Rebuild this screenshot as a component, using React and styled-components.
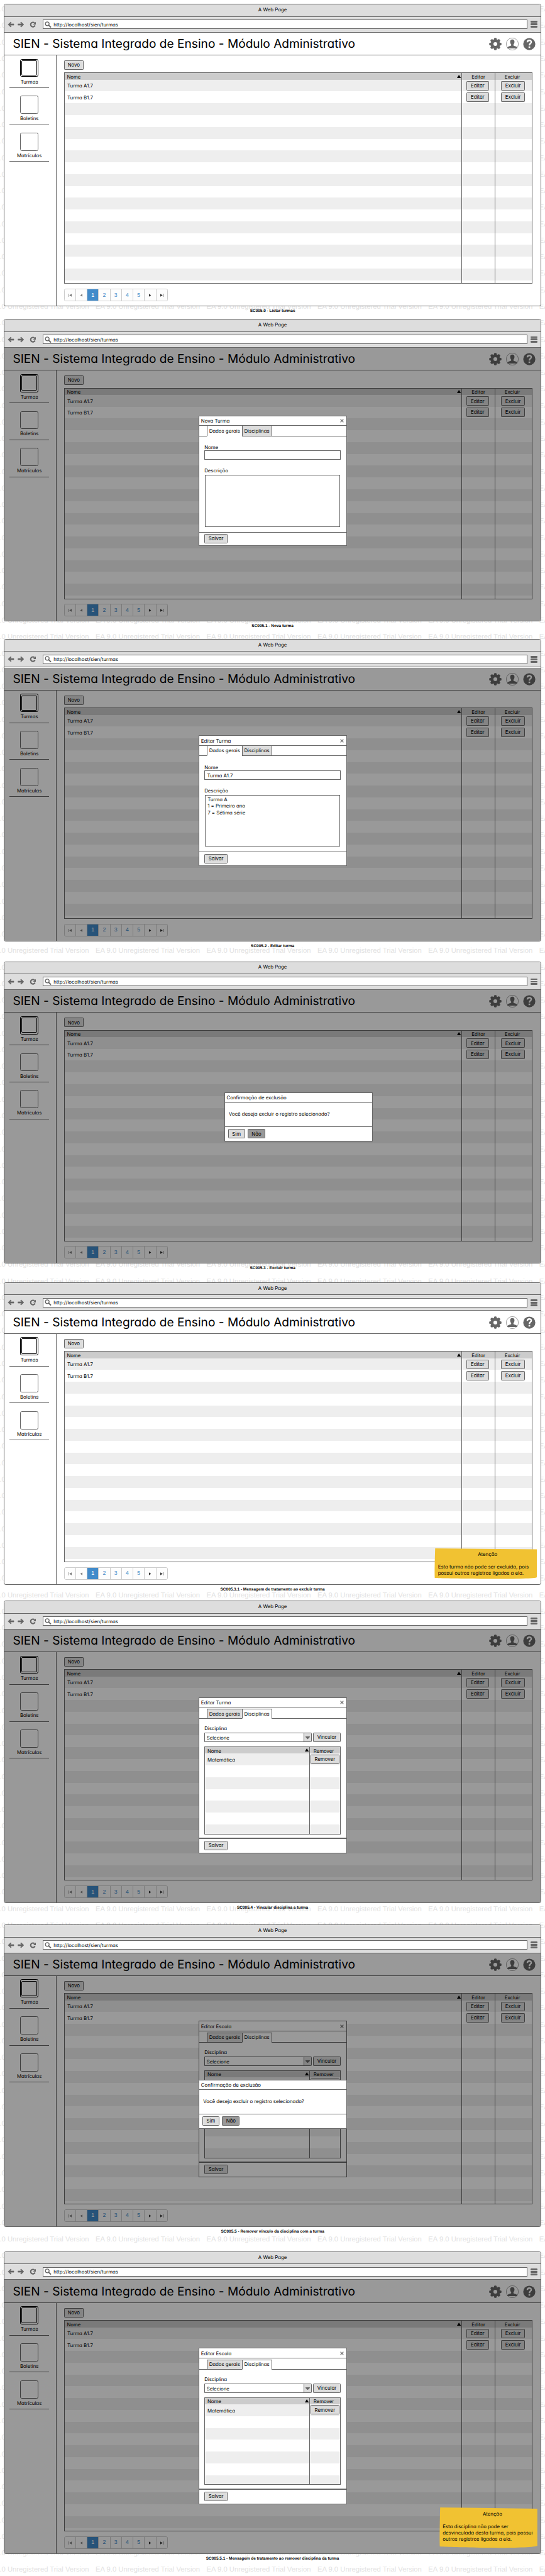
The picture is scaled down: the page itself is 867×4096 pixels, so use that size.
import React from "react";
import styled, { createGlobalStyle, css } from "styled-components";

const u = (n) => `${+(n * 0.6257).toFixed(4)}px`;
const LINE = "#666";
const line = `1px solid ${LINE}`;

const GlobalStyle = createGlobalStyle`
  *, *::before, *::after { box-sizing: border-box; }
  html, body { margin: 0; padding: 0; background: #fff; }
  body {
    font-family: Inter, "Liberation Sans", sans-serif;
    font-size: ${u(12.5)};
    line-height: ${u(16)};
    font-feature-settings: "cv11" 1, "calt" 0;
    text-rendering: geometricPrecision;
    color: #000;
  }
`;

/* ---------- sheet and watermark ---------- */

const Sheet = styled.main`
  display: grid;
  width: 867px;
  height: 4096px;
  overflow: hidden;
`;

const Watermark = styled.div`
  grid-area: 1 / 1;
  overflow: hidden;
  height: 4096px;
  padding-top: ${u(3.5)};
  color: #e2e2e2;
  font: ${u(18.04)} / ${u(42)} "Liberation Sans", Arial, sans-serif;
`;

const WatermarkRow = styled.div`
  display: flex;
  height: ${u(42)};
  margin-left: ${u(-39)};
  white-space: nowrap;
`;

const WatermarkText = styled.span`
  flex: 0 0 ${u(282)};
`;

const Screens = styled.div`
  grid-area: 1 / 1;
  z-index: 1;
  padding: ${u(10)} 0 0 ${u(10)};
`;

const Figure = styled.figure`
  margin: 0;
  padding-top: ${(p) => u(p.$gap)};
  width: ${u(1366)};
`;

const Caption = styled.figcaption`
  margin-top: ${u(7)};
  height: ${u(12)};
  text-align: center;
  font: bold ${u(10.36)} / ${u(12)} "Liberation Sans", Arial, sans-serif;
`;

/* ---------- browser window ---------- */

const Window = styled.div`
  position: relative;
  display: flex;
  flex-direction: column;
  height: ${u(768)};
  border: ${u(2.4)} solid ${LINE};
  border-radius: ${u(5)};
  background: #fff;
  overflow: hidden;
`;

const TitleBar = styled.div`
  flex: 0 0 ${u(31)};
  padding-top: ${u(4)};
  text-align: center;
  background: #ddd;
  border-bottom: ${line};
`;

const AddressBar = styled.div`
  flex: 0 0 ${u(40)};
  display: flex;
  align-items: center;
  padding: 0 ${u(7.5)} 0 ${u(8)};
  background: #ddd;
  border-bottom: ${line};
`;

const NavIcons = styled.div`
  display: flex;
  width: ${u(89)};
  svg { display: block; height: ${u(16)}; width: ${u(17)}; }
  svg + svg { margin-left: ${u(8)}; }
  svg:last-child { margin-left: ${u(13)}; }
`;

const UrlField = styled.div`
  display: flex;
  align-items: center;
  flex: 1;
  height: ${u(24)};
  padding-left: ${u(4)};
  background: #fff;
  border: ${line};
  svg { width: ${u(17)}; height: ${u(16)}; margin-right: ${u(5)}; }
`;

const MenuIcon = styled.div`
  display: flex;
  flex-direction: column;
  justify-content: space-between;
  width: ${u(18)};
  height: ${u(16.5)};
  margin-left: ${u(8)};
  i { height: ${u(4.2)}; border-radius: ${u(2)}; background: ${LINE}; }
`;

const AppHeader = styled.header`
  flex: 0 0 ${u(58)};
  display: flex;
  align-items: center;
  justify-content: space-between;
  padding: 0 ${u(13)} 0 ${u(21)};
  border-bottom: ${line};
`;

const AppTitle = styled.h1`
  margin: 0;
  font-size: ${u(30.6)};
  line-height: 1;
  font-weight: 400;
  white-space: nowrap;
`;

const HeaderIcons = styled.div`
  display: flex;
  gap: ${u(11)};
  margin-top: ${u(3)};
  svg { display: block; width: ${u(32)}; height: ${u(32)}; }
`;

const Body = styled.div`
  flex: 1;
  display: flex;
  min-height: 0;
`;

const Sidebar = styled.nav`
  flex: 0 0 ${u(132)};
  padding: ${u(9)} 0 0 ${u(13)};
  border-right: ${line};
`;

const NavItem = styled.div`
  display: flex;
  flex-direction: column;
  align-items: center;
  width: ${u(100)};
  height: ${u(74)};
  margin-bottom: ${u(20)};
  border-bottom: ${line};
`;

const NavTile = styled.span`
  display: flex;
  width: ${u(46)};
  height: ${u(46)};
  margin-bottom: ${u(3.5)};
  padding: ${u(1.8)};
  border: ${u(2.4)} solid ${(p) => (p.$active ? "#000" : LINE)};
  border-radius: ${u(4)};
  ${(p) => p.$active && css`
    &::before {
      content: "";
      flex: 1;
      border: 1px solid #000;
      border-radius: ${u(3)};
    }
  `}
`;

const Main = styled.section`
  flex: 1;
  min-width: 0;
  padding: ${u(13)} ${u(21)} 0 ${u(19)};
`;

/* ---------- controls ---------- */

const Button = styled.button`
  display: flex;
  align-items: center;
  justify-content: center;
  flex: none;
  width: ${(p) => u(p.$w)};
  height: ${u(24)};
  padding: 0 0 ${u(1)};
  font: inherit;
  font-feature-settings: inherit;
  color: #000;
  background: ${(p) => (p.$pressed ? "#999" : "#ddd")};
  border: ${line};
  border-radius: ${u(2)};
`;

const Grid = styled.div`
  display: flex;
  height: ${(p) => u(p.$h)};
  margin-top: ${(p) => u(p.$mt)};
  border: ${line};
  overflow: hidden;
`;

const Column = styled.div`
  flex: ${(p) => (p.$w ? `0 0 ${u(p.$w)}` : "1")};
  & + & { border-left: ${line}; }
`;

const HeadCell = styled.div`
  display: flex;
  align-items: center;
  justify-content: ${(p) => (p.$center ? "center" : "space-between")};
  height: ${u(16.4)};
  padding: ${u(1)} ${(p) => u(p.$r || 0)} 0 ${(p) => u(p.$l || 0)};
  background: #ccc;
  svg { width: ${u(10)}; height: ${u(8)}; margin: 0 ${u(1)} ${u(2)} 0; }
`;

const Cell = styled.div`
  display: flex;
  align-items: flex-start;
  height: ${u(30)};
  padding-top: ${(p) => u(p.$t === undefined ? 7.5 : p.$t)};
  padding-left: ${(p) => u(p.$l || 0)};
  &:nth-child(even) { background: #eee; }
`;

const Pager = styled.div`
  display: flex;
  width: ${u(264)};
  height: ${u(32)};
  margin-top: ${u(12)};
  background: #fdfdfd;
  border: 1px solid #ccc;
  border-radius: ${u(4)};
  font: ${u(14)} / 1 "Liberation Sans", Arial, sans-serif;
  overflow: hidden;
`;

const PagerCell = styled.span`
  flex: 1;
  display: flex;
  align-items: center;
  justify-content: center;
  color: ${(p) => (p.$current ? "#fff" : "#428bca")};
  background: ${(p) => (p.$current ? "#428bca" : "transparent")};
  & + & { border-left: 1px solid #ccc; }
  svg { width: ${u(8)}; height: ${u(8)}; margin-top: ${u(1)}; fill: ${(p) => (p.$off ? "#777" : "#333")}; }
`;

/* ---------- layers over the window ---------- */

const Shade = styled.div`
  position: absolute;
  inset: ${u(71)} -2px -2px;
  background: rgba(0, 0, 0, 0.4);
`;

const Dialog = styled.div`
  position: absolute;
  left: ${(p) => u(p.$x)};
  top: ${(p) => u(p.$y)};
  display: flex;
  flex-direction: column;
  width: ${u(377)};
  height: ${(p) => u(p.$h)};
  background: #fff;
  border: ${line};
`;

const DialogTitle = styled.div`
  flex: 0 0 ${u(25)};
  display: flex;
  align-items: center;
  justify-content: space-between;
  padding: 0 ${u(7)} 0 ${u(4.5)};
  border-bottom: ${line};
  svg { width: ${u(9.5)}; height: ${u(9.5)}; }
`;

const Tabs = styled.div`
  flex: 0 0 ${(p) => u(p.$h)};
  display: flex;
  padding-top: ${(p) => u(p.$t)};
  &::before { content: ""; width: ${u(19)}; border-bottom: ${line}; }
  &::after { content: ""; flex: 1; border-bottom: ${line}; border-left: ${line}; }
`;

const Tab = styled.div`
  display: flex;
  align-items: center;
  justify-content: center;
  width: ${(p) => u(p.$w)};
  padding-bottom: ${u(1)};
  background: ${(p) => (p.$active ? "#fff" : "#ddd")};
  border-left: ${line};
  border-top: ${(p) => (p.$lid ? line : "none")};
  border-bottom: 1px solid ${(p) => (p.$active ? "#fff" : LINE)};
`;

const Form = styled.div`
  flex: 1;
  min-height: 0;
  padding: ${(p) => u(p.$t)} ${u(14.5)} 0 ${u(13)};
`;

const Label = styled.div`
  height: ${u(16)};
  margin-top: ${(p) => u(p.$mt || 0)};
`;

const Input = styled.div`
  height: ${(p) => u(p.$h || 24)};
  padding: ${u(3)} ${u(5.5)};
  border: ${line};
  white-space: pre-line;
`;

const TextArea = styled(Input)`
  margin: ${u(2.5)} ${u(1)} 0;
`;

const SelectRow = styled.div`
  display: flex;
  justify-content: space-between;
  margin-top: ${u(3)};
`;

const Select = styled.div`
  display: flex;
  width: ${u(273)};
  height: ${u(24)};
  padding: ${u(3)} 0 0 ${u(4)};
  border: ${line};
  border-radius: 0 ${u(2)} ${u(2)} 0;
`;

const SelectArrow = styled.span`
  display: flex;
  align-items: center;
  justify-content: center;
  width: ${u(19)};
  height: calc(100% + ${u(3)});
  margin: ${u(-3)} 0 0 auto;
  background: #ddd;
  border-left: ${line};
  svg { width: ${u(11)}; height: ${u(7)}; margin-top: ${u(2)}; }
`;

const DialogFooter = styled.div`
  flex: 0 0 ${(p) => u(p.$h)};
  display: flex;
  gap: ${u(7)};
  padding: ${(p) => u(p.$t)} 0 0 ${(p) => u(p.$l)};
  border-top: ${(p) => (p.$thick ? u(3.2) : "1px")} solid ${LINE};
`;

const Message = styled.p`
  flex: 1;
  margin: 0;
  padding: ${u(20)} 0 0 ${u(10)};
`;

const Note = styled.div`
  position: absolute;
  left: ${(p) => u(p.$x)};
  top: ${(p) => u(p.$y)};
  display: grid;
  width: ${(p) => u(p.$w)};
  height: ${(p) => u(p.$h)};
  > * { grid-area: 1 / 1; }
  > svg { width: 100%; height: 100%; }
`;

const NoteText = styled.div`
  z-index: 1;
  padding: ${(p) => u(p.$t)} 0 0 ${u(8.5)};
  white-space: pre;
`;

const NoteTitle = styled.div`
  margin-bottom: ${u(16)};
  padding-left: ${(p) => u(p.$l)};
  text-align: center;
`;

/* ---------- drawings ---------- */

const SortArrow = () => (
  <svg viewBox="0 0 10 8"><path d="M5 0 10 8H0z" /></svg>
);

const Magnifier = () => (
  <svg viewBox="0 0 17 16" fill="none" stroke={LINE}>
    <circle cx="6.7" cy="6" r="4.8" strokeWidth="2" />
    <path d="M10 9.6 15.3 14.4" strokeWidth="2.8" strokeLinecap="round" />
  </svg>
);

const Gear = () => (
  <svg viewBox="-16 -16 32 32">
    <g fill={LINE}>
      {[0, 45, 90, 135, 180, 225, 270, 315].map((a) => (
        <path key={a} transform={`rotate(${a})`} d="M-4.6 -9 -3 -14.4Q-2.6 -15.6 -1.5 -15.6H1.5Q2.6 -15.6 3 -14.4L4.6 -9z" />
      ))}
      <circle r="11.6" />
    </g>
    <circle r="4.9" fill="#fff" />
  </svg>
);

const User = () => (
  <svg viewBox="-16 -16 32 32">
    <circle r="15.4" fill="#fff" stroke={LINE} strokeWidth="1" />
    <path
      fill={LINE}
      d="M0 -11.6C3.6 -11.6 5.8 -9.2 5.5 -5.8 5.3 -2.4 4.4 -.6 2.9 1V3.4C3.6 5 12 5.4 12.600 9V11.2H-12.600V9C-12 5.4 -3.6 5 -2.9 3.4V1C-4.4 -.6 -5.3 -2.4 -5.5 -5.8 -5.8 -9.2 -3.6 -11.6 0 -11.6z"
    />
  </svg>
);

const Help = () => (
  <svg viewBox="-16 -16 32 32">
    <circle r="15.4" fill={LINE} />
    <path d="M-4.9 -4.6C-4.9 -8.2 -2.6 -9.2 .2 -9.2 3 -9.2 5 -7.6 5 -5 5 -1.6 .2 -1.6 .2 3.4" fill="none" stroke="#fff" strokeWidth="3.8" />
    <rect x="-1.9" y="6" width="4.2" height="4" fill="#fff" />
  </svg>
);

const Cross = () => (
  <svg viewBox="0 0 10 10"><path d="M1 1 9 9M9 1 1 9" stroke={LINE} strokeWidth="2.2" /></svg>
);

const NotePaper = () => (
  <svg viewBox="0 0 260 78" preserveAspectRatio="none">
    <path d="M2 0 259.5 2.4V73.5C258 77 180 78 140 77.6 80 77.2 10 76.5 1 75.2Q0 60 2 0z" fill="#f1c232" />
  </svg>
);

const pagerShapes = {
  first: <svg viewBox="0 0 8 8"><path d="M0 0H1.2V8H0zM8 .5V7.5L2 4z" /></svg>,
  prev: <svg viewBox="0 0 8 8"><path d="M6.5 .5V7.5L1 4z" /></svg>,
  next: <svg viewBox="0 0 8 8"><path d="M1.5 .5V7.5L7 4z" /></svg>,
  last: <svg viewBox="0 0 8 8"><path d="M6.8 0H8V8H6.8zM0 .5V7.5L6 4z" /></svg>,
};

/* ---------- composed parts ---------- */

const blanks = (n) => Array.from({ length: n }, (_, i) => <Cell key={i} />);

const Chrome = () => (
  <>
    <TitleBar>A Web Page</TitleBar>
    <AddressBar>
      <NavIcons>
        <svg viewBox="0 0 17 16" fill={LINE} stroke={LINE} strokeLinejoin="round"><path d="M1.2 8 8 1.5 9.5 3 6.8 6.3H16V9.7H6.8L9.5 13 8 14.5z" /></svg>
        <svg viewBox="0 0 17 16" fill={LINE} stroke={LINE} strokeLinejoin="round"><path d="M15.8 8 9 1.5 7.5 3 10.2 6.3H1V9.7H10.2L7.5 13 9 14.5z" /></svg>
        <svg viewBox="0 0 17 16">
          <path d="M12.6 4A5.7 5.7 0 1 0 13.8 10.4" fill="none" stroke={LINE} strokeWidth="3.4" />
          <path d="M16.5 .6V7.8H9z" fill={LINE} />
        </svg>
      </NavIcons>
      <UrlField><Magnifier />http://localhost/sien/turmas</UrlField>
      <MenuIcon><i /><i /><i /></MenuIcon>
    </AddressBar>
  </>
);

const Classes = () => (
  <Grid $h={537} $mt={7}>
    <Column>
      <HeadCell $l={6}>Nome<SortArrow /></HeadCell>
      <Cell $l={7}>Turma A1.7</Cell>
      <Cell $l={7}>Turma B1.7</Cell>
      {blanks(16)}
    </Column>
    <Column $w={84.5}>
      <HeadCell $center>Editar</HeadCell>
      <Cell $l={11} $t={4}><Button $w={57}>Editar</Button></Cell>
      <Cell $l={11} $t={2}><Button $w={57}>Editar</Button></Cell>
      {blanks(16)}
    </Column>
    <Column $w={94}>
      <HeadCell $center $r={6}>Excluir</HeadCell>
      <Cell $l={14.5} $t={4}><Button $w={61}>Excluir</Button></Cell>
      <Cell $l={14.5} $t={2}><Button $w={61}>Excluir</Button></Cell>
      {blanks(16)}
    </Column>
  </Grid>
);

const Page = () => (
  <>
    <Chrome />
    <AppHeader>
      <AppTitle>SIEN - Sistema Integrado de Ensino - Módulo Administrativo</AppTitle>
      <HeaderIcons><Gear /><User /><Help /></HeaderIcons>
    </AppHeader>
    <Body>
      <Sidebar>
        <NavItem><NavTile $active />Turmas</NavItem>
        <NavItem><NavTile />Boletins</NavItem>
        <NavItem><NavTile />Matrículas</NavItem>
      </Sidebar>
      <Main>
        <Button $w={50}>Novo</Button>
        <Classes />
        <Pager>
          <PagerCell $off>{pagerShapes.first}</PagerCell>
          <PagerCell $off>{pagerShapes.prev}</PagerCell>
          <PagerCell $current>1</PagerCell>
          {[2, 3, 4, 5].map((n) => <PagerCell key={n}>{n}</PagerCell>)}
          <PagerCell>{pagerShapes.next}</PagerCell>
          <PagerCell>{pagerShapes.last}</PagerCell>
        </Pager>
      </Main>
    </Body>
  </>
);

const ClassDialog = ({ title, name, description }) => (
  <Dialog $x={493.5} $y={243.5} $h={331}>
    <DialogTitle>{title}<Cross /></DialogTitle>
    <Tabs $h={26} $t={0}>
      <Tab $w={89} $active>Dados gerais</Tab>
      <Tab $w={75}>Disciplinas</Tab>
    </Tabs>
    <Form $t={20}>
      <Label>Nome</Label>
      <Input>{name}</Input>
      <Label $mt={19.5}>Descrição</Label>
      <TextArea $h={132}>{description}</TextArea>
    </Form>
    <DialogFooter $h={34} $t={4} $l={13}><Button $w={59}>Salvar</Button></DialogFooter>
  </Dialog>
);

const SubjectsDialog = ({ title }) => (
  <Dialog $x={493.5} $y={243.5} $h={397}>
    <DialogTitle>{title}<Cross /></DialogTitle>
    <Tabs $h={28.5} $t={2.5}>
      <Tab $w={89} $lid>Dados gerais</Tab>
      <Tab $w={75} $active $lid>Disciplinas</Tab>
    </Tabs>
    <Form $t={16.5}>
      <Label>Disciplina</Label>
      <SelectRow>
        <Select>
          Selecione
          <SelectArrow><svg viewBox="0 0 11 7"><path d="M0 0H11V1.5L5.5 7 0 1.5z" fill={LINE} /></svg></SelectArrow>
        </Select>
        <Button $w={70}>Vincular</Button>
      </SelectRow>
      <Grid $h={223} $mt={11}>
        <Column>
          <HeadCell $l={6}>Nome<SortArrow /></HeadCell>
          <Cell $l={6}>Matemática</Cell>
          {blanks(6)}
        </Column>
        <Column $w={78}>
          <HeadCell $l={9}>Remover</HeadCell>
          <Cell $l={1} $t={2}><Button $w={74}>Remover</Button></Cell>
          {blanks(6)}
        </Column>
      </Grid>
    </Form>
    <DialogFooter $h={38.5} $t={4.5} $l={13} $thick><Button $w={59}>Salvar</Button></DialogFooter>
  </Dialog>
);

const ConfirmDialog = ({ x, y }) => (
  <Dialog $x={x} $y={y} $h={125}>
    <DialogTitle>Confirmação de exclusão</DialogTitle>
    <Message>Você deseja excluir o registro selecionado?</Message>
    <DialogFooter $h={37} $t={5.5} $l={8}>
      <Button $w={43}>Sim</Button>
      <Button $w={45} $pressed>Não</Button>
    </DialogFooter>
  </Dialog>
);

const Warning = ({ x, y, w, h, top, shift, children }) => (
  <Note $x={x} $y={y} $w={w} $h={h}>
    <NotePaper />
    <NoteText $t={top}>
      <NoteTitle $l={shift}>Atenção</NoteTitle>
      {children}
    </NoteText>
  </Note>
);

const Screen = ({ gap = 0, caption, children }) => (
  <Figure $gap={gap}>
    <Window><Page />{children}</Window>
    <Caption>{caption}</Caption>
  </Figure>
);

export default function App() {
  return (
    <>
      <GlobalStyle />
      <Sheet>
        <Watermark aria-hidden="true">
          {Array.from({ length: 156 }, (_, r) => (
            <WatermarkRow key={r}>
              {Array.from({ length: 6 }, (_, c) => (
                <WatermarkText key={c}>EA 9.0 Unregistered Trial Version</WatermarkText>
              ))}
            </WatermarkRow>
          ))}
        </Watermark>
        <Screens>
          <Screen caption="SC005.0 - Listar turmas" />
          <Screen gap={14} caption="SC005.1 - Nova turma">
            <Shade />
            <ClassDialog title="Nova Turma" />
          </Screen>
          <Screen gap={26} caption="SC005.2 - Editar turma">
            <Shade />
            <ClassDialog
              title="Editar Turma"
              name="Turma A1.7"
              description={"Turma A\n1 = Primeiro ano\n7 = Sétima série"}
            />
          </Screen>
          <Screen gap={32} caption="SC005.3 - Excluir turma">
            <Shade />
            <ConfirmDialog x={558.5} y={331.5} />
          </Screen>
          <Screen gap={29} caption="SC005.3.1 - Mensagem de tratamento ao excluir turma">
            <Warning x={1093.5} y={674} w={261} h={78} top={7.5} shift={0}>
              {"Esta turma não pode ser excluída, pois\npossui outros registros ligados a ela."}
            </Warning>
          </Screen>
          <Screen gap={22} caption="SC005.4 - Vincular disciplina a turma">
            <Shade />
            <SubjectsDialog title="Editar Turma" />
          </Screen>
          <Screen gap={36} caption="SC005.5 - Remover vínculo da disciplina com a turma">
            <SubjectsDialog title="Editar Escola" />
            <Shade />
            <ConfirmDialog x={493.5} y={392.5} />
          </Screen>
          <Screen gap={44} caption="SC005.5.1 - Mensagem de tratamento ao remover disciplina da turma">
            <Shade />
            <SubjectsDialog title="Editar Escola" />
            <Warning x={1105.5} y={649} w={249.5} h={103} top={7.5} shift={12}>
              {"Esta disciplina não pode ser\ndesvinculada desta turma, pois possui\noutros registros ligados a ela."}
            </Warning>
          </Screen>
        </Screens>
      </Sheet>
    </>
  );
}
